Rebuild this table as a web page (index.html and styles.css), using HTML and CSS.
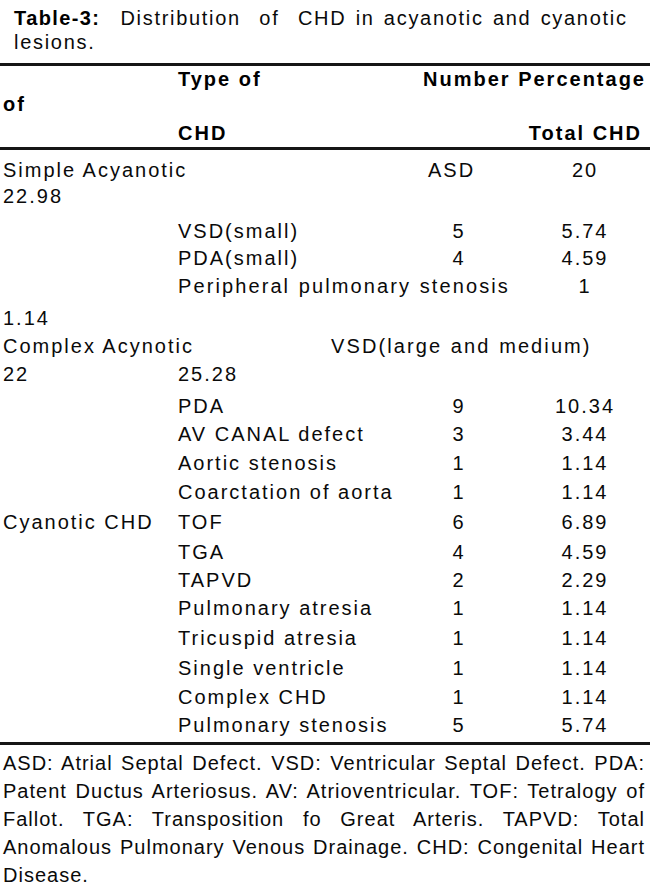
FILE: index.html
```html
<!DOCTYPE html>
<html lang="en">
<head>
<meta charset="utf-8">
<title>Table-3: Distribution of CHD in acyanotic and cyanotic lesions</title>
<link rel="stylesheet" href="styles.css">
</head>
<body>
<div class="page">
  <div class="title">
    <div class="title-line"><b class="label">Table-3:</b><span class="title-text">Distribution  of  CHD in acyanotic and cyanotic</span></div>
    <div class="title-line">lesions.</div>
  </div>

  <div class="thead">
    <div class="hrow hr1"><span class="hcol2">Type of</span><span class="hright">Number Percentage</span></div>
    <div class="hrow hr2"><span class="hfirst">of</span></div>
    <div class="hrow hr3"><span class="hcol2">CHD</span><span class="hright hend">Total CHD</span></div>
  </div>

  <div class="tbody">
    <div class="row h26"><span class="c1">Simple Acyanotic</span><span class="c3 left">ASD</span><span class="c4">20</span></div>
    <div class="row h35"><span class="c1">22.98</span></div>
    <div class="row h27"><span class="c2">VSD(small)</span><span class="c3">5</span><span class="c4">5.74</span></div>
    <div class="row h28"><span class="c2">PDA(small)</span><span class="c3">4</span><span class="c4">4.59</span></div>
    <div class="row h32"><span class="c2 span23 wide">Peripheral pulmonary stenosis</span><span class="c4">1</span></div>
    <div class="row h28"><span class="c1">1.14</span></div>
    <div class="row h28"><span class="c1">Complex Acynotic</span><span class="c2 span-rest wide">VSD(large and medium)</span></div>
    <div class="row h32"><span class="c1">22</span><span class="c2">25.28</span></div>
    <div class="row h28"><span class="c2">PDA</span><span class="c3">9</span><span class="c4">10.34</span></div>
    <div class="row h29"><span class="c2">AV CANAL defect</span><span class="c3">3</span><span class="c4">3.44</span></div>
    <div class="row h29"><span class="c2">Aortic stenosis</span><span class="c3">1</span><span class="c4">1.14</span></div>
    <div class="row h30"><span class="c2">Coarctation of aorta</span><span class="c3">1</span><span class="c4">1.14</span></div>
    <div class="row h30"><span class="c1">Cyanotic CHD</span><span class="c2">TOF</span><span class="c3">6</span><span class="c4">6.89</span></div>
    <div class="row h28"><span class="c2">TGA</span><span class="c3">4</span><span class="c4">4.59</span></div>
    <div class="row h28"><span class="c2">TAPVD</span><span class="c3">2</span><span class="c4">2.29</span></div>
    <div class="row h30"><span class="c2">Pulmonary atresia</span><span class="c3">1</span><span class="c4">1.14</span></div>
    <div class="row h30"><span class="c2">Tricuspid atresia</span><span class="c3">1</span><span class="c4">1.14</span></div>
    <div class="row h29"><span class="c2">Single ventricle</span><span class="c3">1</span><span class="c4">1.14</span></div>
    <div class="row h28"><span class="c2">Complex CHD</span><span class="c3">1</span><span class="c4">1.14</span></div>
    <div class="row h28"><span class="c2">Pulmonary stenosis</span><span class="c3">5</span><span class="c4">5.74</span></div>
  </div>

  <div class="foot">
    <div class="fline just">ASD: Atrial Septal Defect. VSD: Ventricular Septal Defect. PDA:</div>
    <div class="fline just">Patent Ductus Arteriosus. AV: Atrioventricular. TOF: Tetralogy of</div>
    <div class="fline just">Fallot. TGA: Transposition fo Great Arteris. TAPVD: Total</div>
    <div class="fline just">Anomalous Pulmonary Venous Drainage. CHD: Congenital Heart</div>
    <div class="fline">Disease.</div>
  </div>
</div>
</body>
</html>
```

FILE: styles.css
```css
html, body {
  margin: 0;
  padding: 0;
  background: #ffffff;
}

body {
  font-family: "Liberation Sans", Arial, sans-serif;
  font-size: 20px;
  color: #0a0a0a;
}

.page {
  width: 650px;
}

/* Title */
.title {
  padding: 6px 0 0 14px;
}

.title-line {
  line-height: 24px;
  letter-spacing: 1.7px;
  word-spacing: 2px;
  white-space: pre;
}

.label {
  font-weight: bold;
  letter-spacing: 1.4px;
  word-spacing: 0;
  color: #000;
  margin-right: 20px;
}

/* Header */
.thead {
  margin-top: 9px;
  border-top: 3px solid #151515;
}

.hrow {
  display: flex;
  line-height: 27px;
  font-weight: bold;
  color: #000;
  letter-spacing: 2px;
  white-space: nowrap;
}

.hr1 { height: 25px; }
.hr2 { height: 29px; }
.hr3 { height: 27px; }

.hcol2 {
  padding-left: 178px;
}

.hfirst {
  padding-left: 3px;
}

.hright {
  margin-left: auto;
  padding-right: 4px;
}

.hend {
  padding-right: 8px;
}

/* Body */
.tbody {
  border-top: 3px solid #151515;
  padding-top: 6px;
}

.row {
  display: grid;
  grid-template-columns: 175px 250px 62px 160px;
  padding-left: 3px;
  line-height: 28px;
  letter-spacing: 2px;
  white-space: nowrap;
  align-items: start;
}

.h26 { height: 26px; }
.h27 { height: 27px; }
.h28 { height: 28px; }
.h29 { height: 29px; }
.h30 { height: 30px; }
.h32 { height: 32px; }
.h35 { height: 35px; }

.c1 { grid-column: 1; }
.c2 { grid-column: 2; }
.c3 { grid-column: 3; text-align: center; }
.c4 { grid-column: 4; text-align: center; padding-left: 30px; }

.c3.left {
  text-align: left;
  padding-left: 0;
}

.span23 { grid-column: 2 / 4; }

.span-rest {
  grid-column: 2 / 5;
  padding-left: 153px;
}

.wide {
  word-spacing: 1px;
  letter-spacing: 2.1px;
}

/* Footnote */
.foot {
  margin-top: 3px;
  border-top: 3px solid #151515;
  padding: 4px 5px 0 3px;
}

.fline {
  line-height: 28px;
  letter-spacing: 1px;
  white-space: nowrap;
}

.fline.just {
  white-space: normal;
  text-align: justify;
  text-align-last: justify;
}
```
